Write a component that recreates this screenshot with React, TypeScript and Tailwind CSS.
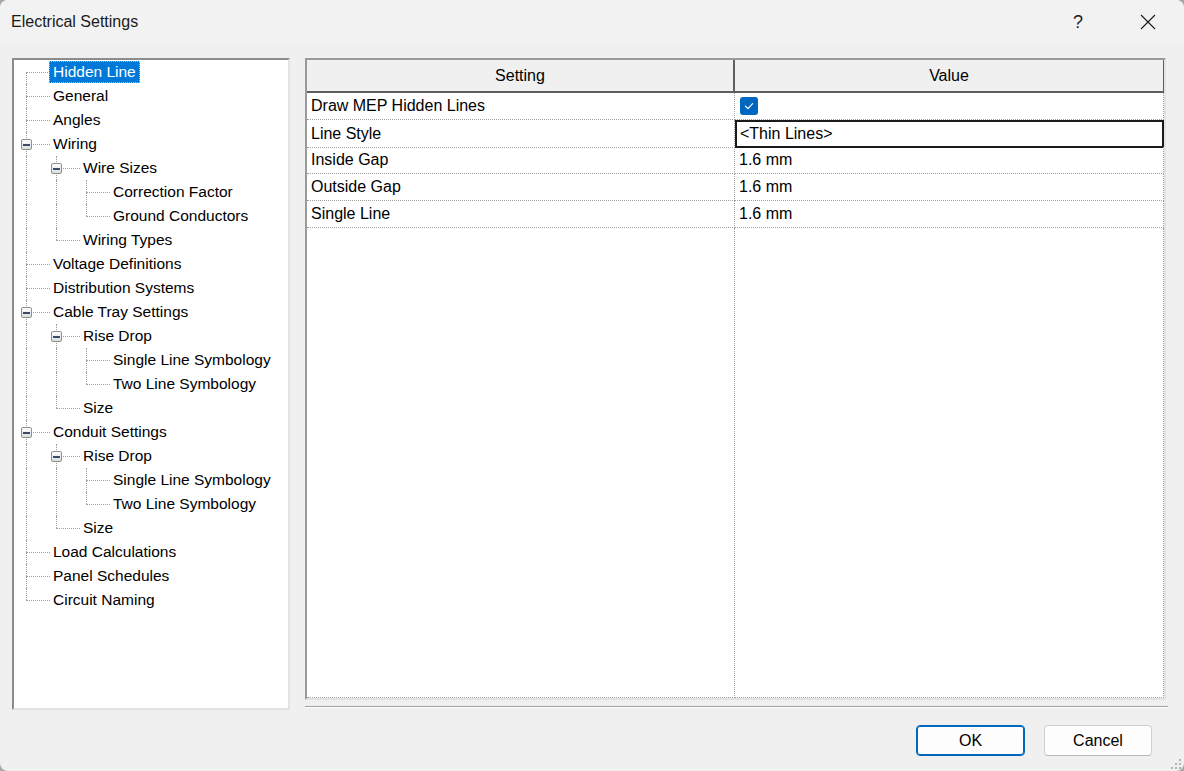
import React from "react";

type Node = { label: string; level: number };

const TREE: Node[] = [
  { label: "Hidden Line", level: 0 },
  { label: "General", level: 0 },
  { label: "Angles", level: 0 },
  { label: "Wiring", level: 0 },
  { label: "Wire Sizes", level: 1 },
  { label: "Correction Factor", level: 2 },
  { label: "Ground Conductors", level: 2 },
  { label: "Wiring Types", level: 1 },
  { label: "Voltage Definitions", level: 0 },
  { label: "Distribution Systems", level: 0 },
  { label: "Cable Tray Settings", level: 0 },
  { label: "Rise Drop", level: 1 },
  { label: "Single Line Symbology", level: 2 },
  { label: "Two Line Symbology", level: 2 },
  { label: "Size", level: 1 },
  { label: "Conduit Settings", level: 0 },
  { label: "Rise Drop", level: 1 },
  { label: "Single Line Symbology", level: 2 },
  { label: "Two Line Symbology", level: 2 },
  { label: "Size", level: 1 },
  { label: "Load Calculations", level: 0 },
  { label: "Panel Schedules", level: 0 },
  { label: "Circuit Naming", level: 0 },
];

const ROWS = [
  { setting: "Draw MEP Hidden Lines", value: "check" },
  { setting: "Line Style", value: "<Thin Lines>" },
  { setting: "Inside Gap", value: "1.6 mm" },
  { setting: "Outside Gap", value: "1.6 mm" },
  { setting: "Single Line", value: "1.6 mm" },
];

// is there a later node at `level` before the tree climbs above it?
function hasLaterSibling(i: number, level: number) {
  for (let j = i + 1; j < TREE.length; j++) {
    if (TREE[j].level < level) return false;
    if (TREE[j].level === level) return true;
  }
  return false;
}

const VLine = ({ className }: { className: string }) => (
  <div className={`absolute left-[12px] border-l border-dotted border-[#a0a0a0] ${className}`} />
);

const TreeRow = ({ node, i }: { node: Node; i: number }) => {
  const hasChildren = i + 1 < TREE.length && TREE[i + 1].level > node.level;
  const selected = i === 0;
  const cols = [];
  for (let a = 0; a < node.level; a++) {
    cols.push(
      <div key={a} className="relative h-full w-[30px] shrink-0">
        {hasLaterSibling(i, a) && <VLine className="top-0 bottom-0" />}
      </div>
    );
  }
  return (
    <div className="flex h-6 items-center">
      {cols}
      <div className="relative h-full w-[35px] shrink-0">
        {i !== 0 && <VLine className="top-0 h-1/2" />}
        {hasLaterSibling(i, node.level) && <VLine className="top-1/2 bottom-0" />}
        <div className="absolute left-[12px] top-1/2 w-[24px] border-t border-dotted border-[#a0a0a0]" />
        {hasChildren && (
          <div className="absolute left-[7px] top-[7px] flex h-[11px] w-[11px] items-center justify-center rounded-[2px] border border-[#8e8f8f] bg-gradient-to-b from-white to-[#dcdcdc]">
            <div className="h-[2px] w-[7px] bg-[#3b4a6e]" />
          </div>
        )}
      </div>
      <div
        className={
          selected
            ? "flex h-[22px] items-center border border-dotted border-[#f6b26b] bg-[#0078d7] px-[3px] text-white"
            : "flex h-[22px] items-center border border-transparent px-[3px] text-black"
        }
      >
        {node.label}
      </div>
    </div>
  );
};

const CheckBox = () => (
  <div className="flex h-[18px] w-[18px] items-center justify-center rounded-[3px] bg-[#0067c0]">
    <svg width="12" height="12" viewBox="0 0 12 12" fill="none">
      <path d="M2.5 6.2 L5 8.6 L9.6 3.6" stroke="white" strokeWidth="1.2" strokeLinecap="round" strokeLinejoin="round" />
    </svg>
  </div>
);

export default function App() {
  return (
    <div className="h-[771px] w-[1184px] overflow-hidden bg-[#a8a8a8]" style={{ fontFamily: '"Liberation Sans", Arial, sans-serif' }}>
      <div className="relative flex h-full w-full flex-col rounded-lg bg-[#f0f0f0]">
        {/* title bar */}
        <div className="flex h-[44px] items-center rounded-t-lg bg-[#f2f2f2] pl-[11px]">
          <div className="text-[16px] text-[#1a1a1a]">Electrical Settings</div>
          <div className="ml-auto mr-[57px] text-[18px] text-[#1a1a1a]">?</div>
          <div className="mr-[28px]">
            <svg width="16" height="16" viewBox="0 0 16 16">
              <path d="M1 1 L15 15 M15 1 L1 15" stroke="#1a1a1a" strokeWidth="1.1" />
            </svg>
          </div>
        </div>

        {/* content */}
        <div className="mt-[14px] flex h-[652px] pl-[12px]">
          <div className="h-full w-[278px] border-b-2 border-l-2 border-r-2 border-t-2 border-b-[#e3e3e3] border-l-[#8c8c8c] border-r-[#e3e3e3] border-t-[#8c8c8c] bg-white text-[15.5px]">
            {TREE.map((n, i) => (
              <TreeRow key={i} node={n} i={i} />
            ))}
          </div>

          <div className="ml-[15px] flex w-[863px] flex-col">
            <div className="flex h-[642px] w-[861px] flex-col border-b-2 border-l-2 border-r-2 border-t-2 border-b-[#e3e3e3] border-l-[#9a9a9a] border-r-[#e3e3e3] border-t-[#9a9a9a] bg-white text-[16px] text-black">
              <div className="grid h-[33px] shrink-0 grid-cols-[428px_429px] border-b-2 border-[#5e5e5e] bg-[#f0f0f0]">
                <div className="flex items-center justify-center border-r-2 border-[#5e5e5e] pt-[1px]">Setting</div>
                <div className="flex items-center justify-center border-r border-[#5e5e5e] pt-[1px]">Value</div>
              </div>
              {ROWS.map((r) => (
                <div key={r.setting} className="grid h-[27px] shrink-0 grid-cols-[428px_429px]">
                  <div className="flex items-center border-b border-r border-dotted border-[#a0a0a0] pl-[4px]">{r.setting}</div>
                  {r.value === "check" ? (
                    <div className="flex items-center border-b border-r border-dotted border-[#a0a0a0] pl-[5px]">
                      <CheckBox />
                    </div>
                  ) : r.setting === "Line Style" ? (
                    <div className="flex items-center border-2 border-[#1a1a1a] pl-[3px]">{r.value}</div>
                  ) : (
                    <div className="flex items-center border-b border-r border-dotted border-[#a0a0a0] pl-[4px]">{r.value}</div>
                  )}
                </div>
              ))}
              <div className="grid flex-1 grid-cols-[428px_429px]">
                <div className="border-b border-r border-dotted border-[#a0a0a0]" />
                <div className="border-b border-r border-dotted border-[#a0a0a0]" />
              </div>
            </div>
            <div className="mt-[6px] h-[2px] border-b border-t border-b-white border-t-[#a0a0a0]" />
          </div>
        </div>

        {/* buttons */}
        <div className="mt-[15px] flex justify-end gap-[19px] pr-[32px] text-[16px] text-black">
          <button className="h-[31px] w-[109px] rounded-[4px] border border-[#0067c0] bg-[#fdfdfd] shadow-[inset_0_0_0_1px_#0067c0]">OK</button>
          <button className="h-[31px] w-[108px] rounded-[4px] border border-[#d0d0d0] border-b-[#b8b8b8] bg-[#fdfdfd]">Cancel</button>
        </div>

        <svg className="absolute bottom-[1px] right-[2px]" width="12" height="12" viewBox="0 0 12 12">
          {[
            [10, 2],
            [10, 6],
            [6, 6],
            [10, 10],
            [6, 10],
            [2, 10],
          ].map(([x, y]) => (
            <rect key={`${x}-${y}`} x={x - 1} y={y - 1} width="2" height="2" fill="#b4b4b4" />
          ))}
        </svg>
      </div>
    </div>
  );
}
